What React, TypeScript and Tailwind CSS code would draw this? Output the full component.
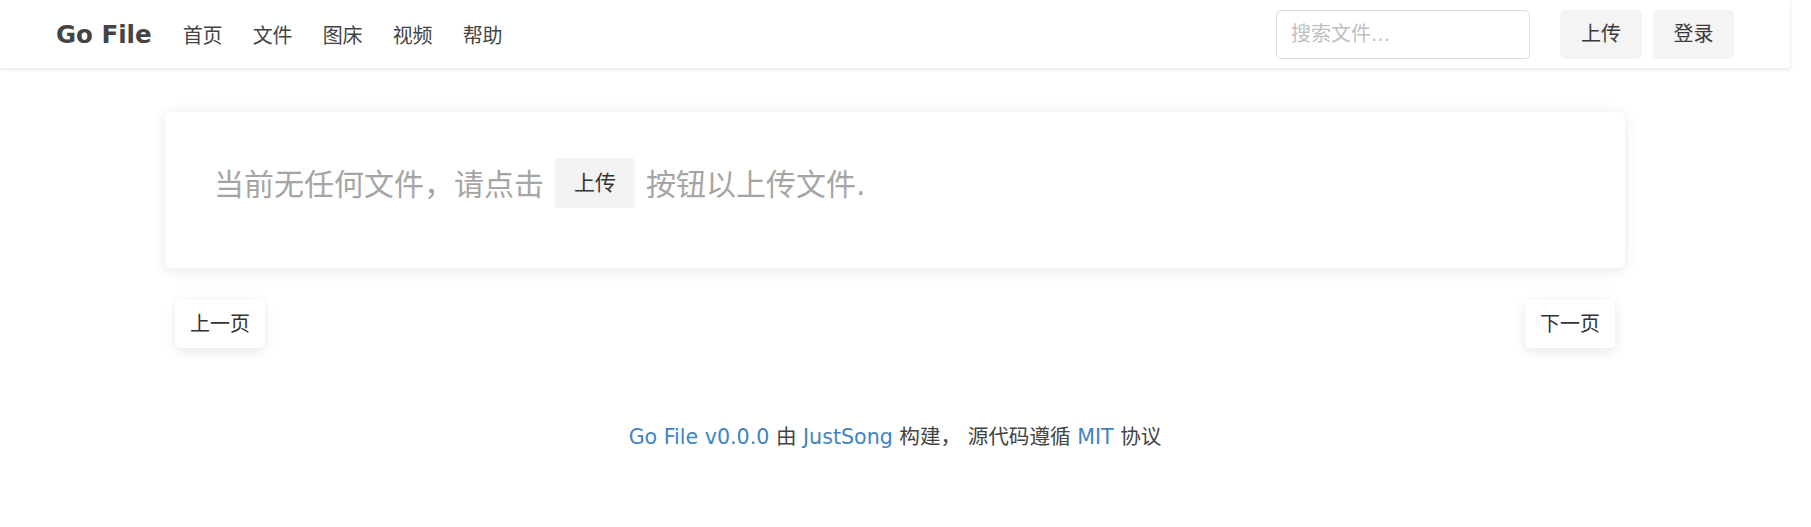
const FONT = '"DejaVu Sans", "Noto Sans CJK SC", sans-serif';

const navItems = ['首页', '文件', '图床', '视频', '帮助'];

function Navbar() {
  return (
    <div className="h-[68px] bg-white shadow-[0_1px_4px_rgba(0,0,0,0.12)] flex items-center px-[56px]">
      <div className="flex items-center pt-[3px]">
        <span className="text-[24.5px] font-bold text-[#444] leading-none">Go File</span>
        <div className="flex items-center gap-[30px] ml-[31px]">
          {navItems.map((item) => (
            <span key={item} className="text-[20px] text-[#444] leading-none">
              {item}
            </span>
          ))}
        </div>
      </div>
      <div className="ml-auto flex items-center">
        <input
          placeholder="搜索文件..."
          className="w-[254px] h-[49px] border border-[#dcdcdc] rounded-[5px] px-[14px] text-[20px] text-[#333] placeholder:text-[#c0c0c0] outline-none"
          style={{ fontFamily: FONT }}
        />
        <button className="ml-[30px] w-[82px] h-[49px] rounded-[5px] bg-[#f4f4f4] text-[20px] text-[#3a3a3a]">
          上传
        </button>
        <button className="ml-[11px] w-[81px] h-[49px] rounded-[5px] bg-[#f4f4f4] text-[20px] text-[#3a3a3a]">
          登录
        </button>
      </div>
    </div>
  );
}

function EmptyCard() {
  return (
    <div className="h-[156px] bg-white rounded-[6px] shadow-[0_2px_14px_rgba(0,0,0,0.1)] pt-[46px] pl-[49px]">
      <div className="flex items-center text-[30px] text-[#a5a5a5] leading-none">
        <span className="pt-[3px]">当前无任何文件，请点击</span>
        <button className="mx-[11px] w-[80px] h-[50px] rounded-[4px] bg-[#f3f3f3] text-[21px] text-[#333]">
          上传
        </button>
        <span className="pt-[3px]">按钮以上传文件.</span>
      </div>
    </div>
  );
}

function Pager() {
  return (
    <div className="flex justify-between px-[10px] mt-[32px]">
      <button className="w-[90px] h-[48px] rounded-[5px] bg-white shadow-[0_3px_12px_rgba(0,0,0,0.1)] text-[20px] text-[#333]">
        上一页
      </button>
      <button className="w-[90px] h-[48px] rounded-[5px] bg-white shadow-[0_3px_12px_rgba(0,0,0,0.1)] text-[20px] text-[#333]">
        下一页
      </button>
    </div>
  );
}

function Footer() {
  return (
    <div className="mt-[74px] text-center text-[20.6px] leading-[30px] text-[#444]">
      <span className="text-[#4183c4]">Go File v0.0.0</span> 由{' '}
      <span className="text-[#4183c4]">JustSong</span> 构建， 源代码遵循{' '}
      <span className="text-[#4183c4]">MIT</span> 协议
    </div>
  );
}

export default function App() {
  return (
    <div className="w-[1790px] min-h-[527px] bg-white" style={{ fontFamily: FONT }}>
      <Navbar />
      <div className="mx-[165px] mt-[44px]">
        <EmptyCard />
        <Pager />
      </div>
      <Footer />
    </div>
  );
}
